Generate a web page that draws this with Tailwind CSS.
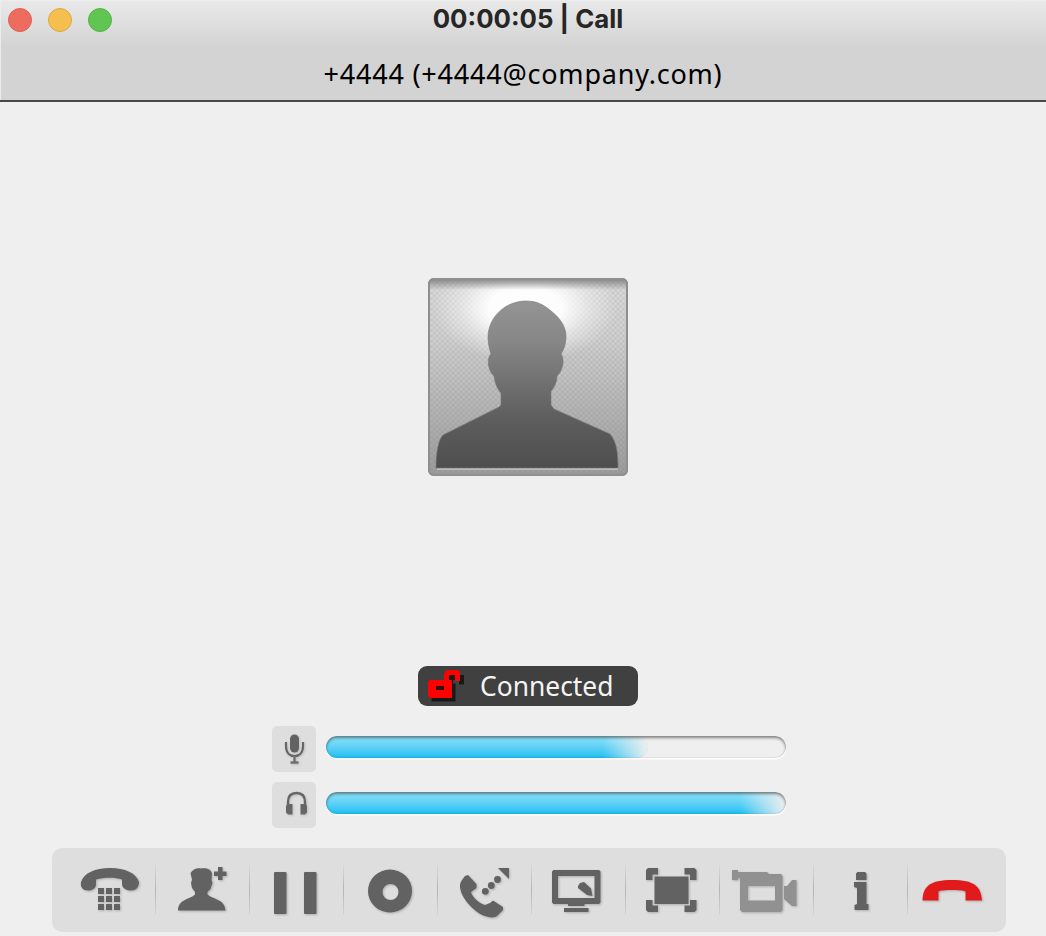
<!DOCTYPE html>
<html lang="en">
<head>
<meta charset="utf-8">
<title>Call</title>
<script src="https://cdn.jsdelivr.net/npm/@tailwindcss/browser@4"></script>
</head>
<body class="w-[1046px] h-[936px] overflow-hidden bg-[#efefef] flex flex-col">
<header class="h-[102px] shrink-0 flex flex-col border-b-2 border-[#48484a] bg-linear-to-b from-[#e9e9e9] from-0% via-[#d3d3d3] via-48% to-[#d3d3d3] shadow-[inset_1px_1px_0_#ececec]">
  <div class="h-10 grid grid-cols-[428px_200px_1fr] items-center">
    <div class="flex gap-4 pl-2">
      <span class="size-6 rounded-full bg-[#ed6b5f] border border-[#de6056]"></span>
      <span class="size-6 rounded-full bg-[#f5bf4f] border border-[#dca744]"></span>
      <span class="size-6 rounded-full bg-[#61c554] border border-[#55b146]"></span>
    </div>
    <h1 class="text-center whitespace-nowrap font-['Inter',sans-serif] font-bold text-[25.8px] leading-[38px] pb-[2px] text-[#262626]">00:00:05 | Call</h1>
  </div>
  <p class="h-[60px] pt-3 text-center whitespace-nowrap font-['Noto_Sans',sans-serif] text-[27px] tracking-[0.78px] leading-[44px] text-black">+4444 (+4444@company.com)</p>
</header>
<main class="flex-1 flex flex-col items-center pl-[10px]">
  <svg class="mt-44 shrink-0" width="200" height="198" viewBox="428 278 200 198">
    <defs>
      <linearGradient id="bg" x1="0" y1="0" x2="0" y2="1"><stop offset="0" stop-color="#dcdcdc"/><stop offset=".3" stop-color="#d2d2d2"/><stop offset="1" stop-color="#9c9c9c"/></linearGradient>
      <linearGradient id="man" x1="0" y1="0" x2="0" y2="1"><stop offset="0" stop-color="#949494"/><stop offset=".25" stop-color="#868686"/><stop offset=".7" stop-color="#5e5e5e"/><stop offset="1" stop-color="#4e4e4e"/></linearGradient>
      <radialGradient id="glow"><stop offset="0" stop-color="#fff"/><stop offset=".4" stop-color="#fff" stop-opacity=".95"/><stop offset=".7" stop-color="#fff" stop-opacity=".4"/><stop offset="1" stop-color="#fff" stop-opacity="0"/></radialGradient>
      <linearGradient id="edge" x1="0" y1="0" x2="0" y2="1"><stop offset="0" stop-color="#808080"/><stop offset="1" stop-color="#808080" stop-opacity="0"/></linearGradient>
      <pattern id="mesh" width="5.33" height="5.33" patternUnits="userSpaceOnUse"><path d="M0 0L5.33 5.33M5.33 0L0 5.33" stroke="#666" stroke-opacity=".18" stroke-width="1"/></pattern>
    </defs>
    <rect x="428" y="278" width="200" height="198" rx="6" fill="url(#bg)"/>
    <rect x="428" y="278" width="200" height="198" rx="6" fill="url(#mesh)"/>
    <svg x="430" y="280" width="196" height="194" viewBox="430 280 196 194"><ellipse cx="525" cy="308" rx="92" ry="54" fill="url(#glow)"/></svg>
    <rect x="428" y="278" width="200" height="12" rx="6" fill="url(#edge)"/>
    <rect x="429" y="279" width="198" height="196" rx="5" fill="none" stroke="#8f8f8f" stroke-width="2"/>
    <path d="M437 469H618" stroke="#c9c9c9" stroke-width="1.5"/>
    <path d="M526 301C506 301 489 316 488 336C488 345 490 350 491 354C487 357 487 370 494 376C495 384 498 390 501 393V405L499 407L443 435C438 440 436 454 436 468H618C618 454 617 442 610 434L554 409L551 405V391C555 387 557 381 557 376C563 371 565 359 561 354C564 349 566 344 566 336C566 326 559 317 551 311C543 304 536 301 526 301Z" fill="url(#man)" stroke="#777" stroke-width=".6"/>
  </svg>
  <div class="mt-[190px] w-[220px] h-10 shrink-0 rounded-[9px] bg-[#404040] flex items-center">
    <svg class="ml-2 w-10 h-9" viewBox="426 668 40 36">
      <g fill="none" stroke="#181818" stroke-width="5" transform="translate(3.500 3.500)"><path d="M447 681V674H458V681"/><path fill="#181818" stroke="none" d="M428 680h24v18h-24z"/></g>
      <path d="M430 680H444V674L447 670H458L460 672V681H455V675H449V680H452V698H430L428 696V682Z" fill="#f00"/>
      <path d="M436 686h8v4h-8z" fill="#301010"/>
    </svg>
    <span class="ml-[14px] font-['Noto_Sans',sans-serif] text-[26.4px] leading-10 text-[#f4f4f4]">Connected</span>
  </div>
  <div class="mt-5 w-[514px] shrink-0 flex flex-col gap-[10px] translate-x-px">
    <div class="flex gap-[10px]">
      <div class="w-11 h-[46px] rounded-[5px] bg-[#dedede]">
        <svg class="size-full drop-shadow-[1px_1px_1px_rgba(0,0,0,0.15)]" viewBox="272 726 44 46"><rect x="290" y="734.5" width="9" height="18" rx="4.5" fill="#626262"/><path d="M286 742V746C286 753 290 756 294.500 756S303 753 303 746V742" fill="none" stroke="#666" stroke-width="2.200"/><path d="M294.500 756V762M290.500 762.500H298.500" fill="none" stroke="#707070" stroke-width="2.400"/></svg>
      </div>
      <div class="relative mt-[10px] w-[460px] h-[22px] rounded-full overflow-hidden shadow-[0_1.5px_0_#fff]">
        <div class="h-full rounded-r-full bg-linear-to-b from-[#8ce3fa] to-[#0fbef1] mask-r-from-86% mask-r-to-100%" style="width:322px"></div>
        <div class="absolute inset-0 rounded-full shadow-[inset_0_2px_3px_rgba(65,65,65,0.6),inset_0_0_2px_rgba(80,80,80,0.25)]"></div>
      </div>
    </div>
    <div class="flex gap-[10px]">
      <div class="w-11 h-[46px] rounded-[5px] bg-[#dedede]">
        <svg class="size-full drop-shadow-[1px_1px_1px_rgba(0,0,0,0.15)]" viewBox="272 782 44 46"><path d="M288 806V802C288 796 291 793 296.500 793S305 796 305 802V806" fill="none" stroke="#666" stroke-width="2.400"/><path d="M287 804h5.500v10.500h-4.500l-2-2v-6ZM306 804h-5.500v10.500h4.500l2-2v-6Z" fill="#666"/></svg>
      </div>
      <div class="relative mt-[10px] w-[460px] h-[22px] rounded-full overflow-hidden shadow-[0_1.5px_0_#fff]">
        <div class="h-full bg-linear-to-b from-[#8ce3fa] to-[#0fbef1] mask-r-from-90% mask-r-to-100%" style="width:460px"></div>
        <div class="absolute inset-0 rounded-full shadow-[inset_0_2px_3px_rgba(65,65,65,0.6),inset_0_0_2px_rgba(80,80,80,0.25)]"></div>
      </div>
    </div>
  </div>
</main>
<nav class="mx-auto mb-1 w-[954px] h-[84px] translate-x-[6px] shrink-0 rounded-[10px] bg-[#dedede] flex items-center text-[#626262] [&_svg]:block [&_svg]:fill-current [&_svg]:drop-shadow-[1.5px_1.5px_1px_rgba(0,0,0,0.22)]">
  <button class="w-[103px]" aria-label="Dial pad"><svg width="103" height="84" viewBox="52 848 103 84"><path d="M81 882C84 873 95 868 110 868S136 873 139 882C139 887 136 890.500 131 890.500C126 890.500 122 888 122 884V879.500C115 877 104 877 96 879.500V884C96 888 93 890.500 88 890.500C83 890.500 80 887 81 882Z"/><path d="M98 888h6v6h-6zM106 888h6v6h-6zM114 888h6v6h-6zM98 896h6v6h-6zM106 896h6v6h-6zM114 896h6v6h-6zM98 904h6v6h-6zM106 904h6v6h-6zM114 904h6v6h-6z"/></svg></button>
  <i class="w-px h-[50px] shrink-0 bg-linear-to-b from-[#d8d8d8] via-[#b4b4b4] to-[#d4d4d4]"></i>
  <button class="w-[93px]" aria-label="Add participant"><svg width="93" height="84" viewBox="156 848 93 84"><path d="M190.500 873C193 869 197 867.500 201 868.500C206 867.500 211 869 212 873.500L211.500 880L212.500 883L210.500 889L207.500 892V894.500C212 899 225 899 225.500 910.500H178C178 899 191 899 195 894.500V892L192 888L191 883L192 879.500Z"/><path d="M218 867h4.500v4.500H226.500v4.500H222.500v4h-4.500v-4H214v-4.500h4z"/></svg></button>
  <i class="w-px h-[50px] shrink-0 bg-linear-to-b from-[#d8d8d8] via-[#b4b4b4] to-[#d4d4d4]"></i>
  <button class="w-[93px]" aria-label="Hold"><svg width="93" height="84" viewBox="250 848 93 84"><rect x="274" y="872" width="12.500" height="42" rx="1"/><rect x="304" y="872" width="12.500" height="42" rx="1"/></svg></button>
  <i class="w-px h-[50px] shrink-0 bg-linear-to-b from-[#d8d8d8] via-[#b4b4b4] to-[#d4d4d4]"></i>
  <button class="w-[93px]" aria-label="Record"><svg width="93" height="84" viewBox="344 848 93 84"><path fill-rule="evenodd" d="M368 891a22 21.500 0 1 0 44 0a22 21.500 0 1 0-44 0ZM382.500 892a8 8 0 1 0 16 0a8 8 0 1 0-16 0Z"/></svg></button>
  <i class="w-px h-[50px] shrink-0 bg-linear-to-b from-[#d8d8d8] via-[#b4b4b4] to-[#d4d4d4]"></i>
  <button class="w-[93px]" aria-label="Transfer"><svg width="93" height="84" viewBox="438 848 93 84"><path d="M465 876L468 875L476.500 884V888L471 892C472 897 480 904 485 905L490 903L493 900.500L503 907V910L497 916C494 918.500 488 917.500 482 915C471 909 460 896 460 886C460 883 461 881 465 876ZM498 868h11v11Z"/><circle cx="497.500" cy="879.500" r="3.400"/><circle cx="491.300" cy="885.500" r="3.400"/><circle cx="485.300" cy="891.300" r="3.400"/></svg></button>
  <i class="w-px h-[50px] shrink-0 bg-linear-to-b from-[#d8d8d8] via-[#b4b4b4] to-[#d4d4d4]"></i>
  <button class="w-[93px]" aria-label="Share desktop"><svg width="93" height="84" viewBox="532 848 93 84"><path fill-rule="evenodd" d="M553.500 870H599L600.500 871.500V902.500L599 904H584.500V906H568V904H553.500L552 902.500V871.500ZM558 876V898H594.500V876Z"/><path d="M564 908h24.500v4h-24.500zM578 886L580 883L584 882L591 888.500L592.500 896L587 895L578 888Z"/></svg></button>
  <i class="w-px h-[50px] shrink-0 bg-linear-to-b from-[#d8d8d8] via-[#b4b4b4] to-[#d4d4d4]"></i>
  <button class="w-[93px]" aria-label="Full screen"><svg width="93" height="84" viewBox="626 848 93 84"><path d="M654.500 876.500h34v27.500h-34zM646 870l2-2h10v6.500h-5.500v5.500h-6.500zM696.500 870l-2-2h-10v6.500h5.500v5.500h6.500zM646 910l2 2h10v-6.500h-5.500v-5.500h-6.500zM696.500 910l-2 2h-10v-6.500h5.500v-5.500h6.500z"/></svg></button>
  <i class="w-px h-[50px] shrink-0 bg-linear-to-b from-[#d8d8d8] via-[#b4b4b4] to-[#d4d4d4]"></i>
  <button class="w-[93px] text-[#919191]" aria-label="Video"><svg width="93" height="84" viewBox="720 848 93 84"><path fill-rule="evenodd" d="M732 870H738V872H767L769 874H781L782.500 876V910L781 912H742L740 910V878H738V880H732ZM748 886V900.500H775V886ZM784 886H787L792 880H796.500V906H792L784 899Z"/></svg></button>
  <i class="w-px h-[50px] shrink-0 bg-linear-to-b from-[#d8d8d8] via-[#b4b4b4] to-[#d4d4d4]"></i>
  <button class="w-[93px]" aria-label="Call info"><svg width="93" height="84" viewBox="814 848 93 84"><path d="M857.500 872H865L866.500 873.500V880H856V873.500ZM854 882H866.500V904H868.500V910H854.500V905L857 904V888L854 887Z"/></svg></button>
  <i class="w-px h-[50px] shrink-0 bg-linear-to-b from-[#d8d8d8] via-[#b4b4b4] to-[#d4d4d4]"></i>
  <button class="w-[98px] text-[#e11b1b]" aria-label="Hang up"><svg width="98" height="84" viewBox="908 848 98 84"><path d="M922.500 900.500C923 886 930 880 952 880S981 886 982 900.500H965.500V891.500C961 889.500 942 889.500 938.500 891.500V900.500Z"/></svg></button>
</nav>
</body>
</html>
